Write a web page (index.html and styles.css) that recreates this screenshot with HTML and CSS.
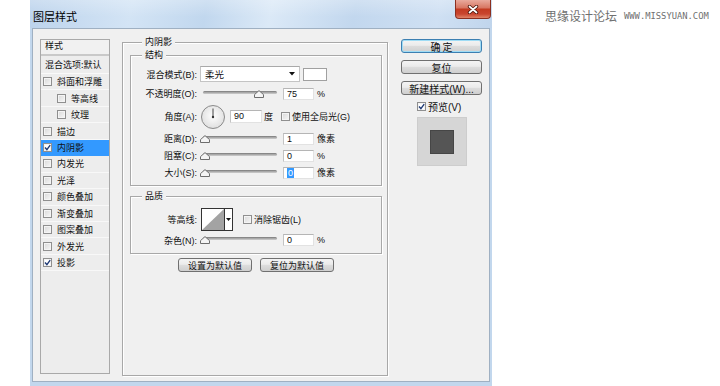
FILE: index.html
```html
<!DOCTYPE html>
<html lang="zh-CN">
<head>
<meta charset="utf-8">
<title>图层样式</title>
<link rel="stylesheet" href="styles.css">
</head>
<body>
<div class="page">
  <div class="window">
    <div class="titlebar">
      <span class="title">图层样式</span>
      <div class="close">
        <svg width="12" height="9" viewBox="0 0 12 9"><path d="M2.5 1.5 L9.5 7.5 M9.5 1.5 L2.5 7.5" stroke="#4a1208" stroke-width="3.4" stroke-linecap="round"/><path d="M2.5 1.5 L9.5 7.5 M9.5 1.5 L2.5 7.5" stroke="#fff" stroke-width="1.8" stroke-linecap="round"/></svg>
      </div>
    </div>
    <div class="client">
      <div class="stylelist">
        <div class="list-head">样式</div>
        <div class="list-blend">混合选项:默认</div>
        <div class="item"><span class="cb"></span>斜面和浮雕</div>
        <div class="item sub"><span class="cb"></span>等高线</div>
        <div class="item sub"><span class="cb"></span>纹理</div>
        <div class="item"><span class="cb"></span>描边</div>
        <div class="item selected"><span class="cb"><svg width="7" height="7" viewBox="0 0 7 7"><path d="M1 3.6 L2.9 5.6 L6.2 1.2" stroke="#1f3a75" stroke-width="1.4" fill="none"/></svg></span>内阴影</div>
        <div class="item"><span class="cb"></span>内发光</div>
        <div class="item"><span class="cb"></span>光泽</div>
        <div class="item"><span class="cb"></span>颜色叠加</div>
        <div class="item"><span class="cb"></span>渐变叠加</div>
        <div class="item"><span class="cb"></span>图案叠加</div>
        <div class="item"><span class="cb"></span>外发光</div>
        <div class="item"><span class="cb"><svg width="7" height="7" viewBox="0 0 7 7"><path d="M1 3.6 L2.9 5.6 L6.2 1.2" stroke="#1f3a75" stroke-width="1.4" fill="none"/></svg></span>投影</div>
      </div>

      <div class="group main">
        <div class="legend main-legend">内阴影</div>

        <div class="group inner struct">
          <div class="legend">结构</div>
          <div class="rows">
            <div class="row r-blend">
              <span class="lbl">混合模式(B):</span>
              <div class="select"><span>柔光</span><svg width="6" height="4" viewBox="0 0 6 4"><path d="M0 0 H6 L3 3.5 Z" fill="#111"/></svg></div>
              <div class="swatch"></div>
            </div>
            <div class="row r-opacity">
              <span class="lbl">不透明度(O):</span>
              <div class="slider"><div class="track"></div><svg class="thumb" style="left:54px" width="10" height="8" viewBox="0 0 10 8"><path d="M0.5 7.5 V4.6 L5 0.6 L9.5 4.6 V7.5 Z" fill="#f4f4f4" stroke="#6d6d6d"/></svg></div>
              <div class="field">75</div>
              <span class="unit">%</span>
            </div>
            <div class="row r-angle">
              <span class="lbl">角度(A):</span>
              <svg class="dial" width="24" height="24" viewBox="0 0 24 24"><defs><radialGradient id="dg" cx="50%" cy="45%" r="60%"><stop offset="0" stop-color="#ffffff"/><stop offset="1" stop-color="#dcdcdc"/></radialGradient></defs><circle cx="12" cy="12" r="11.5" fill="url(#dg)" stroke="#8a8a8a"/><path d="M12 12 V3.5" stroke="#444" stroke-width="1"/><circle cx="12" cy="12" r="1.2" fill="#333"/></svg>
              <div class="field angle">90</div>
              <span class="deg">度</span>
              <span class="cb global"></span>
              <span class="cbtext">使用全局光(G)</span>
            </div>
            <div class="row r-slide">
              <span class="lbl">距离(D):</span>
              <div class="slider"><div class="track"></div><svg class="thumb" style="left:0px" width="10" height="8" viewBox="0 0 10 8"><path d="M0.5 7.5 V4.6 L5 0.6 L9.5 4.6 V7.5 Z" fill="#f4f4f4" stroke="#6d6d6d"/></svg></div>
              <div class="field">1</div>
              <span class="unit">像素</span>
            </div>
            <div class="row r-slide">
              <span class="lbl">阻塞(C):</span>
              <div class="slider"><div class="track"></div><svg class="thumb" style="left:0px" width="10" height="8" viewBox="0 0 10 8"><path d="M0.5 7.5 V4.6 L5 0.6 L9.5 4.6 V7.5 Z" fill="#f4f4f4" stroke="#6d6d6d"/></svg></div>
              <div class="field">0</div>
              <span class="unit">%</span>
            </div>
            <div class="row r-slide">
              <span class="lbl">大小(S):</span>
              <div class="slider"><div class="track"></div><svg class="thumb" style="left:0px" width="10" height="8" viewBox="0 0 10 8"><path d="M0.5 7.5 V4.6 L5 0.6 L9.5 4.6 V7.5 Z" fill="#f4f4f4" stroke="#6d6d6d"/></svg></div>
              <div class="field"><span class="selected-text">0</span></div>
              <span class="unit">像素</span>
            </div>
          </div>
        </div>

        <div class="group inner quality">
          <div class="legend">品质</div>
          <div class="rows">
            <div class="row r-contour">
              <span class="lbl">等高线:</span>
              <div class="contour">
                <svg class="curve" width="24" height="23" viewBox="0 0 24 23"><rect x="0.5" y="0.5" width="23" height="22" fill="#fff" stroke="#333"/><path d="M1 22 L23 1 V22 Z" fill="#a3a3a3"/></svg>
                <div class="drop"><svg width="5" height="3" viewBox="0 0 5 3"><path d="M0 0 H5 L2.5 3 Z" fill="#111"/></svg></div>
              </div>
              <span class="cb anti"></span>
              <span class="cbtext">消除锯齿(L)</span>
            </div>
            <div class="row r-noise">
              <span class="lbl">杂色(N):</span>
              <div class="slider"><div class="track"></div><svg class="thumb" style="left:0px" width="10" height="8" viewBox="0 0 10 8"><path d="M0.5 7.5 V4.6 L5 0.6 L9.5 4.6 V7.5 Z" fill="#f4f4f4" stroke="#6d6d6d"/></svg></div>
              <div class="field">0</div>
              <span class="unit">%</span>
            </div>
          </div>
        </div>

        <div class="defaults">
          <div class="btn small">设置为默认值</div>
          <div class="btn small">复位为默认值</div>
        </div>
      </div>

      <div class="actions">
        <div class="btn big primary">确定</div>
        <div class="btn big">复位</div>
        <div class="btn big">新建样式(W)...</div>
        <div class="preview-row"><span class="cb"><svg width="7" height="7" viewBox="0 0 7 7"><path d="M1 3.6 L2.9 5.6 L6.2 1.2" stroke="#1f3a75" stroke-width="1.4" fill="none"/></svg></span><span class="cbtext">预览(V)</span></div>
        <div class="preview"><div class="preview-swatch"></div></div>
      </div>
    </div>
  </div>
  <div class="watermark">
    <span class="wm-cn">思缘设计论坛</span>
    <span class="wm-en">WWW.MISSYUAN.COM</span>
  </div>
</div>
</body>
</html>
```

FILE: styles.css
```css
* { box-sizing: border-box; margin: 0; padding: 0; }
html, body { background: #fff; }
body {
  width: 720px;
  height: 386px;
  overflow: hidden;
  font-family: "Liberation Sans", "Noto Sans CJK SC", sans-serif;
  font-size: 9px;
  color: #111;
}
.page {
  display: flex;
  align-items: flex-start;
  height: 386px;
  padding-left: 30px;
}

/* window frame */
.window {
  width: 462px;
  height: 386px;
  display: flex;
  flex-direction: column;
  background: #c2d7ed;
  padding-bottom: 4px;
}
.titlebar {
  height: 28px;
  flex: none;
  display: flex;
  align-items: flex-start;
  background:
    linear-gradient(180deg, rgba(255,255,255,0.25), rgba(255,255,255,0) 60%),
    linear-gradient(100deg, #bcd3ec 0%, #d3e4f5 22%, #c1d7ee 38%, #dbe9f7 52%, #c2d7ee 70%, #cfe0f3 88%, #c0d5ec 100%);
}
.title {
  font-family: "Noto Sans CJK SC", sans-serif;
  font-size: 11px;
  line-height: 12px;
  padding: 10px 0 0 3px;
  color: #000;
}
.close {
  margin-left: auto;
  margin-right: 1px;
  width: 36px;
  height: 19px;
  border: 1px solid #8b2f20;
  border-top: none;
  border-radius: 0 0 4px 4px;
  background: linear-gradient(180deg, #e9aa9d 0%, #d87865 42%, #c33b22 52%, #c9452e 78%, #e08468 100%);
  display: flex;
  align-items: center;
  justify-content: center;
}

/* client area */
.client {
  flex: 1;
  margin: 0 2px;
  border: 1px solid #9fb0c2;
  background: #f0f0f0;
  display: flex;
  align-items: flex-start;
  padding: 10px 0 0 7px;
}

/* style list */
.stylelist {
  width: 70px;
  height: 335px;
  flex: none;
  border: 1px solid #a9a9a9;
  background: #ededed;
  font-family: "Noto Sans CJK SC", sans-serif;
  font-size: 9px;
}
.list-head {
  height: 16px;
  line-height: 12px;
  padding-left: 4px;
  border-bottom: 2px solid #c9c9c9;
  background: #f1f1f1;
}
.list-blend {
  height: 18px;
  line-height: 17px;
  padding-left: 4px;
  border-bottom: 1px solid #f9f9f9;
}
.item {
  height: 16.45px;
  display: flex;
  align-items: center;
  gap: 5px;
  padding-left: 2px;
  border-bottom: 1px solid #f8f8f8;
}
.item.sub { padding-left: 16px; }
.item.selected { background: #3399ff; border-bottom-color: #3399ff; }

/* checkbox */
.cb {
  width: 9px;
  height: 9px;
  flex: none;
  border: 1px solid #8f8f8f;
  background: linear-gradient(135deg, #d8d8d8, #f7f7f7);
  box-shadow: inset 0 0 0 1px #f4f4f4;
  display: flex;
  align-items: center;
  justify-content: center;
}
.item.selected .cb, .preview-row .cb, .item .cb:has(svg) { background: #fff; }
.cbtext {
  font-family: "Liberation Sans", "Noto Sans CJK SC", sans-serif;
  margin-left: 2px;
  white-space: nowrap;
}

/* group boxes */
.group {
  border: 1px solid #a8a8a8;
  box-shadow: inset 1px 1px 0 #fff, 1px 1px 0 #fff;
}
.legend {
  display: block;
  width: max-content;
  height: 12px;
  line-height: 12px;
  margin: -7px 0 0 11px;
  padding: 0 3px;
  background: #f0f0f0;
  font-family: "Noto Sans CJK SC", sans-serif;
  font-size: 9px;
}
.main-legend { margin-left: 12px; }
.main {
  width: 266px;
  height: 334px;
  flex: none;
  margin: 3px 0 0 12px;
  padding: 0 5px 0 7px;
}
.struct {
  height: 131px;
  margin-top: 7px;
}
.quality {
  height: 58px;
  margin-top: 10px;
}
.rows { padding-top: 3px; }
.row {
  display: flex;
  align-items: center;
  white-space: nowrap;
}
.r-blend { height: 20px; }
.r-opacity { height: 19px; }
.r-angle { height: 27px; }
.r-slide { height: 17px; }
.r-contour { height: 28px; }
.r-noise { height: 14px; }
.lbl {
  width: 66px;
  flex: none;
  text-align: right;
}

.select {
  width: 100px;
  height: 16px;
  margin-left: 3px;
  background: #fff;
  border: 1px solid #c4c4c4;
  border-top-color: #a9a9a9;
  display: flex;
  align-items: center;
  justify-content: space-between;
  padding: 0 4px 0 4px;
  font-family: "Noto Sans CJK SC", sans-serif;
  font-size: 9.5px;
}
.swatch {
  width: 24px;
  height: 13px;
  margin-left: 3px;
  background: #fff;
  border: 1px solid #a0a0a0;
}

.slider {
  position: relative;
  width: 80px;
  height: 12px;
  margin-left: 3px;
  flex: none;
}
.track {
  margin: 3px 3px 0 3px;
  height: 3px;
  border-radius: 1.5px;
  background: linear-gradient(180deg, #777 0%, #a9a9a9 50%, #d0d0d0 100%);
}
.thumb {
  position: absolute;
  top: 2px;
}

.field {
  width: 31px;
  height: 12px;
  margin-left: 3px;
  flex: none;
  background: #fff;
  border: 1px solid #e2e2e2;
  border-top-color: #b5b5b5;
  border-left-color: #c3c3c3;
  line-height: 10px;
  padding-left: 3px;
  font-size: 9px;
}
.field.angle {
  width: 32px;
  height: 13px;
  margin-left: 5px;
  line-height: 11px;
}
.selected-text {
  display: inline-block;
  background: #3399ff;
  color: #fff;
  padding: 0 1px;
  line-height: 10px;
}
.unit { margin-left: 3px; }
.dial { margin-left: 4px; flex: none; }
.deg { margin-left: 2px; }
.cb.global { margin-left: 8px; }

.contour {
  display: flex;
  margin-left: 4px;
  flex: none;
}
.drop {
  width: 8px;
  height: 23px;
  background: #fff;
  border: 1px solid #333;
  border-left: none;
  display: flex;
  align-items: center;
  justify-content: center;
}
.cb.anti { margin-left: 10px; }

/* buttons */
.btn {
  border: 1px solid #707070;
  border-radius: 3px;
  background: linear-gradient(180deg, #f4f4f4 0%, #ebebeb 45%, #dddddd 50%, #cfcfcf 100%);
  display: flex;
  align-items: center;
  justify-content: center;
  white-space: nowrap;
  color: #111;
}
.defaults {
  display: flex;
  justify-content: center;
  gap: 8px;
  margin-top: 4px;
}
.btn.small {
  width: 74px;
  height: 14px;
  font-size: 9px;
}
.actions {
  width: 81px;
  flex: none;
  margin-left: 13px;
  display: flex;
  flex-direction: column;
}
.btn.big {
  height: 14px;
  margin-bottom: 7px;
  font-size: 10px;
}
.btn.primary {
  border-color: #3c7fb1;
  box-shadow: inset 0 0 0 1px #9fdcf5;
  letter-spacing: 2px;
  padding-left: 2px;
}
.preview-row {
  display: flex;
  align-items: center;
  height: 12px;
  margin-top: -2px;
  padding-left: 16px;
  font-size: 10px;
}
.preview {
  width: 50px;
  height: 49px;
  margin-top: 5px;
  align-self: center;
  background: #d6d6d6;
  border: 1px solid #cdcdcd;
  display: flex;
  align-items: center;
  justify-content: center;
}
.preview-swatch {
  width: 24px;
  height: 24px;
  background: #555;
  border: 1px solid #464646;
}

/* watermark */
.watermark {
  margin: 10px 0 0 53px;
  display: flex;
  align-items: center;
  color: #707070;
  white-space: nowrap;
}
.wm-cn {
  font-family: "Noto Sans CJK SC", sans-serif;
  font-size: 12px;
  line-height: 12px;
}
.wm-en {
  margin-left: 7px;
  font-family: "DejaVu Sans Mono", monospace;
  font-size: 8.8px;
  line-height: 12px;
}
```
